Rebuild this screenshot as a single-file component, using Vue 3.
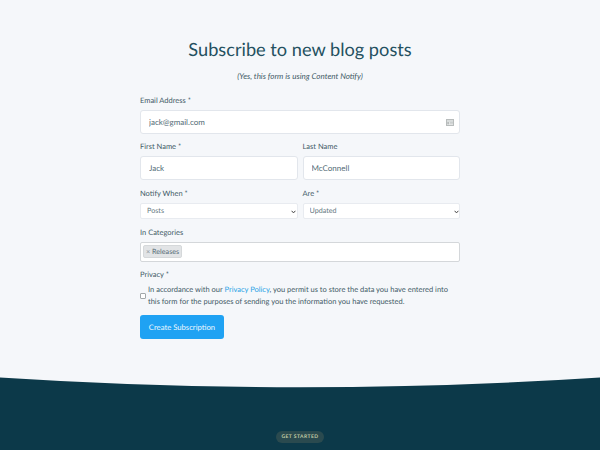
<template>
  <div class="page">
    <main class="main">
      <h1 class="title">Subscribe to new blog posts</h1>
      <p class="sub">(Yes, this form is using Content Notify)</p>
      <form class="form" @submit.prevent>
        <div class="field">
          <label class="label">Email Address *</label>
          <div class="input-wrap">
            <input class="input" type="text" value="jack@gmail.com" />
            <svg class="card-icon" width="8" height="7" viewBox="0 0 8 7">
              <rect x="0.5" y="0.5" width="7" height="6" fill="#eceeee" stroke="#b8bcbc" stroke-width="1" />
              <path d="M1 2H7M4 3.4H7M4 4.8H7" stroke="#b8bcbc" stroke-width="0.7" fill="none" />
              <rect x="1.2" y="3" width="2" height="2.4" fill="#b8bcbc" />
            </svg>
          </div>
        </div>
        <div class="row">
          <div class="field">
            <label class="label">First Name *</label>
            <input class="input" type="text" value="Jack" />
          </div>
          <div class="field">
            <label class="label">Last Name</label>
            <input class="input" type="text" value="McConnell" />
          </div>
        </div>
        <div class="row">
          <div class="field">
            <label class="label">Notify When *</label>
            <div class="select-wrap">
              <select class="select"><option>Posts</option></select>
              <svg class="chev" width="5" height="4" viewBox="0 0 5 4"><path d="M0.6 0.8L2.5 2.9L4.4 0.8" fill="none" stroke="#444" stroke-width="1" /></svg>
            </div>
          </div>
          <div class="field">
            <label class="label">Are *</label>
            <div class="select-wrap">
              <select class="select"><option>Updated</option></select>
              <svg class="chev" width="5" height="4" viewBox="0 0 5 4"><path d="M0.6 0.8L2.5 2.9L4.4 0.8" fill="none" stroke="#444" stroke-width="1" /></svg>
            </div>
          </div>
        </div>
        <div class="field">
          <label class="label">In Categories</label>
          <div class="tags">
            <span class="tag"><span class="tag-x">×</span> Releases</span>
          </div>
        </div>
        <div class="field">
          <label class="label">Privacy *</label>
          <div class="privacy">
            <input class="check" type="checkbox" />
            <span class="privacy-text">In accordance with our <a class="link" href="#">Privacy Policy</a>, you permit us to store the data you have entered into this form for the purposes of sending you the information you have requested.</span>
          </div>
        </div>
        <button class="submit" type="submit">Create Subscription</button>
      </form>
    </main>
    <svg class="curve" width="600" height="11" viewBox="0 0 600 11" preserveAspectRatio="none">
      <path d="M0 0.5Q300 20 600 0.5V11H0Z" fill="#0c3949" />
    </svg>
    <footer class="footer">
      <span class="pill">GET STARTED</span>
    </footer>
  </div>
</template>

<script setup>
</script>

<style>
html, body { margin: 0; background: #f5f7fa; }
</style>

<style scoped>
.page {
  width: 600px;
  height: 450px;
  overflow: hidden;
  background: #f5f7fa;
  font-family: Lato, "Open Sans", sans-serif;
  text-rendering: geometricPrecision;
  color: #2f4a57;
  display: flex;
  flex-direction: column;
}
.main {
  height: 377px;
  flex: none;
  box-sizing: border-box;
  padding: 36px 140px 0;
}
.title {
  margin: 0;
  font-size: 18.2px;
  line-height: 26px;
  font-weight: 400;
  text-align: center;
  color: #24505f;
}
.sub {
  margin: 8px 0 0;
  font-size: 8px;
  line-height: 12px;
  font-style: italic;
  text-align: center;
  color: #3f5a66;
}
.form {
  margin-top: 11.5px;
  display: flex;
  flex-direction: column;
  gap: 6.5px;
}
.row {
  display: grid;
  grid-template-columns: 1fr 1fr;
  gap: 5px;
}
.field {
  display: flex;
  flex-direction: column;
  min-width: 0;
}
.label {
  font-size: 7.5px;
  line-height: 14px;
  margin-bottom: 2px;
  color: #3f5a66;
}
.input-wrap,
.select-wrap {
  position: relative;
  display: flex;
}
.input {
  width: 100%;
  box-sizing: border-box;
  height: 24px;
  border: 1px solid #e2e6ec;
  border-radius: 3px;
  background: #fff;
  padding: 0 8px;
  font: 8px Lato, sans-serif;
  text-rendering: geometricPrecision;
  color: #526b75;
  outline: none;
}
.card-icon {
  position: absolute;
  right: 6px;
  top: 9px;
}
.select {
  appearance: none;
  width: 100%;
  height: 16.5px;
  box-sizing: border-box;
  border: 1px solid #e8ebf0;
  border-radius: 2px;
  background: #fff;
  padding: 0 6px;
  font: 7.2px Lato, sans-serif;
  text-rendering: geometricPrecision;
  color: #66787f;
  outline: none;
}
.chev {
  position: absolute;
  right: 1.5px;
  top: 7px;
}
.tags {
  height: 20px;
  box-sizing: border-box;
  border: 1px solid #d4d7da;
  border-radius: 2px;
  background: #fff;
  display: flex;
  align-items: center;
  padding: 0 1.5px;
}
.tag {
  background: #e2e4e6;
  border: 1px solid #d5d8da;
  border-radius: 2px;
  height: 13px;
  padding: 0 2px 0 2.5px;
  font-size: 7.2px;
  line-height: 11px;
  color: #566c76;
  white-space: nowrap;
  box-sizing: border-box;
}
.tag-x {
  color: #8d979c;
}
.privacy {
  display: flex;
  align-items: center;
  gap: 2px;
}
.check {
  appearance: none;
  width: 6px;
  height: 6.5px;
  margin: 0;
  flex: none;
  box-sizing: border-box;
  border: 1px solid #a3a8aa;
  border-radius: 1px;
  background: #fff;
}
.privacy-text {
  font-size: 7.5px;
  line-height: 12px;
  color: #3f5a66;
}
.link {
  color: #2aa3e6;
  text-decoration: none;
}
.submit {
  width: 84px;
  height: 24.5px;
  border: 0;
  border-radius: 3px;
  background: #1fa2f3;
  color: #f0f9ff;
  font: 7.7px Lato, sans-serif;
  text-rendering: geometricPrecision;
  padding: 0;
}
.curve {
  display: block;
  flex: none;
  background: #f5f7fa;
}
.footer {
  flex: 1;
  background: #0c3949;
  display: flex;
  justify-content: center;
  align-items: flex-start;
  padding-top: 43px;
}
.pill {
  height: 12px;
  line-height: 12px;
  padding: 0 5px;
  border-radius: 6px;
  background: #2a4a4f;
  color: #c3cfa8;
  font-size: 5px;
  font-weight: 700;
  letter-spacing: 0.45px;
}
</style>
